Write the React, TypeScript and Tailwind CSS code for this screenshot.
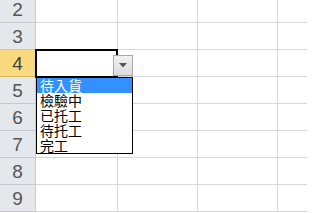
import React from 'react';

const rows = [2, 3, 4, 5, 6, 7, 8, 9];
const options = ['待入貨', '檢驗中', '已托工', '待托工', '完工'];

export default function App() {
    return (
        <div className="relative w-[335px] h-[213px] overflow-hidden bg-white">
            <div className="-mt-[4px]">
                {rows.map((n) => (
                    <div key={n} className="flex h-[27px]">
                        <div
                            className={`w-[36px] shrink-0 flex items-center justify-center border-r border-b text-[19px] leading-none ${
                                n === 4 ? 'bg-[#f9d97d] border-[#d5b45a] text-[#404040]' : 'bg-[#e4e7eb] border-[#c6c9cd] text-[#555555]'
                            }`}
                            style={{ fontFamily: '"Liberation Sans", Arial, sans-serif' }}
                        >
                            {n}
                        </div>
                        <div className="w-[82px] shrink-0 border-r border-b border-[#d6d6d6]" />
                        <div className="w-[80px] shrink-0 border-r border-b border-[#d6d6d6]" />
                        <div className="w-[80px] shrink-0 border-r border-b border-[#d6d6d6]" />
                        <div className="w-[29px] shrink-0 border-b border-[#d6d6d6]" />
                    </div>
                ))}
            </div>

            {/* active cell */}
            <div className="absolute left-[35px] top-[49px] w-[83px] h-[29px] border-2 border-black" />

            {/* dropdown button */}
            <div className="absolute left-[113px] top-[55px] w-[20px] h-[21px] border border-[#a9a9a9] bg-gradient-to-b from-[#f2f2f2] to-[#dcdcdc] flex items-center justify-center">
                <svg width="8" height="5" viewBox="0 0 8 5">
                    <path d="M0 0H8L4 4.5Z" fill="#555" />
                </svg>
            </div>

            {/* dropdown list */}
            <div
                className="absolute left-[36px] top-[77px] w-[97px] h-[77px] border border-black bg-white"
                style={{ fontFamily: '"Noto Sans CJK TC", "Noto Sans CJK SC", sans-serif' }}
            >
                {options.map((o, i) => (
                    <div
                        key={o}
                        className={`h-[15px] pl-[3px] text-[14px] leading-[15px] ${
                            i === 0 ? 'bg-[#3390ff] text-white' : 'text-black'
                        }`}
                    >
                        {o}
                    </div>
                ))}
            </div>
        </div>
    );
}
